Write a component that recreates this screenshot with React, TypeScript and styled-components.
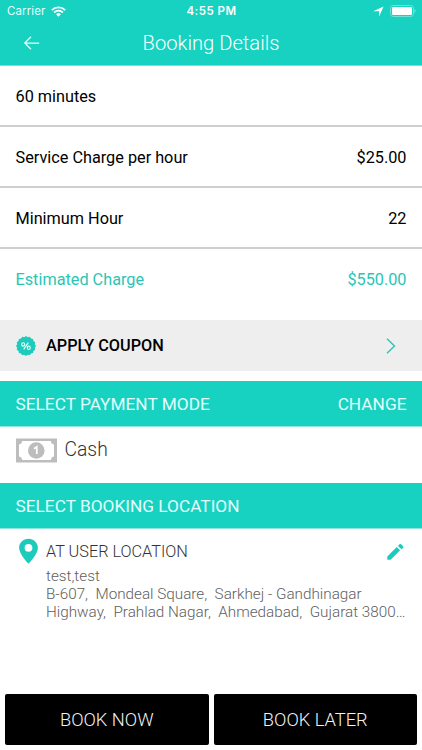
import React from 'react';
import styled, { createGlobalStyle } from 'styled-components';

const teal = '#17d1c1';

const Global = createGlobalStyle`
  * { box-sizing: border-box; }
  body { margin: 0; background: #fff; }
  button { border: 0; padding: 0; background: none; font: inherit; color: inherit; }
  svg { display: block; flex: none; }
`;

const Screen = styled.main`
  width: 422px;
  height: 750px;
  display: flex;
  flex-direction: column;
  overflow: hidden;
  background: #fff;
  color: #000;
  font-family: Roboto, sans-serif;
  font-size: 16.25px;
`;

const Header = styled.header`
  height: 66px;
  flex: none;
  background: ${teal};
  border-bottom: 1px solid #74e3d9;
  color: #fff;
`;

const StatusBar = styled.div`
  height: 22px;
  padding: 0 6px 0 7px;
  display: grid;
  grid-template-columns: 1fr auto 1fr;
  align-items: center;
  font-family: Inter, sans-serif;
  font-size: 11.5px;
`;

const Carrier = styled.div`
  display: flex;
  align-items: center;
  gap: 5px;
  letter-spacing: 0.12px;
  color: #e6fffc;
`;

const Clock = styled.div`
  font-weight: 600;
  letter-spacing: 0.5px;
`;

const StatusIcons = styled.div`
  display: flex;
  justify-content: flex-end;
  align-items: center;
  gap: 6px;
`;

const TitleBar = styled.div`
  height: 41px;
  padding: 0 23px;
  display: grid;
  grid-template-columns: 18px 1fr 18px;
  align-items: center;
`;

const Title = styled.h1`
  margin: 0;
  text-align: center;
  font-size: 20.2px;
  font-weight: 300;
  line-height: 40px;
`;

const ChargeRow = styled.div<{ $accent?: boolean }>`
  height: ${(p) => (p.$accent ? 71 : 61)}px;
  padding: 0 15.5px;
  display: flex;
  flex: none;
  justify-content: space-between;
  line-height: 61px;
  color: ${(p) => (p.$accent ? '#2bc5b6' : '#000')};
  border-bottom: ${(p) => (p.$accent ? '0' : '2px solid #cfcfcf')};
`;

const Coupon = styled.button`
  height: 51px;
  margin-bottom: 10px;
  padding: 0 26px 0 15.5px;
  display: flex;
  flex: none;
  align-items: center;
  background: #eee;
  color: #000;
`;

const CouponLabel = styled.span`
  flex: 1;
  margin-left: 10.5px;
  text-align: left;
  font-weight: 500;
`;

const SectionBar = styled.div`
  height: 46px;
  padding: 0 15.5px;
  display: flex;
  flex: none;
  align-items: center;
  justify-content: space-between;
  background: ${teal};
  border-bottom: 1px solid #8ee8e0;
  color: #e2fffc;
  font-size: 17.27px;
`;

const PaymentMode = styled.div`
  height: 56px;
  padding: 11px 15.5px 0;
  display: flex;
  flex: none;
  align-items: flex-start;
  gap: 8px;
  color: #333;
  font-size: 19.3px;
  font-weight: 300;
  line-height: 24px;
`;

const Location = styled.section`
  flex: 1;
  padding: 9px 16px 0 19px;
  display: grid;
  grid-template-columns: 19px 1fr;
  column-gap: 8px;
  align-content: start;
`;

const LocationHead = styled.div`
  height: 27px;
  display: flex;
  align-items: center;
  justify-content: space-between;
  color: #333;
  font-size: 16.3px;
  font-weight: 300;
`;

const Address = styled.div`
  grid-column: 2;
  margin-top: 2px;
  color: #606060;
  font-size: 15.25px;
  font-weight: 300;
  line-height: 18px;
  white-space: pre;
`;

const Actions = styled.footer`
  flex: none;
  padding: 0 5px 5px;
  display: grid;
  grid-template-columns: 1fr 1fr;
  gap: 5px;
`;

const ActionButton = styled.button`
  height: 51px;
  border-radius: 2px;
  background: #000;
  color: #f2f2f2;
  font-size: 18.25px;
  font-weight: 300;
`;

const WifiIcon = () => (
  <svg width="15" height="11" viewBox="0 0 15 11" fill="none" stroke="#fff" strokeWidth="1.8">
    <path d="M.8 4.1a9.6 9.6 0 0 1 13.4 0M3.1 6.5a6.3 6.3 0 0 1 8.8 0" />
    <path d="M5.1 8.2a3.5 3.5 0 0 1 4.8 0L7.5 10.7z" fill="#fff" stroke="none" />
  </svg>
);

const NavigationIcon = () => (
  <svg width="11" height="11" viewBox="0 0 11 11" fill="#fff">
    <path d="M10.6.4 6.1 10.6V5.2H.2z" />
  </svg>
);

const BatteryIcon = () => (
  <svg width="26" height="12" viewBox="0 0 26 12">
    <rect x=".5" y=".5" width="23" height="11" rx="2.7" fill="none" stroke="#6fe2d8" />
    <rect x="2" y="2" width="20" height="8" rx="1.3" fill="#fff" />
    <path d="M24.6 4v4c1.3-.5 1.3-3.5 0-4" fill="#8be8e0" />
  </svg>
);

const BackIcon = () => (
  <svg width="18" height="16" viewBox="0 0 18 16" fill="none" stroke="#dffffb" strokeWidth="1.25">
    <path d="M8 1.7 1.8 8 8 14.300M2 8h14.2" />
  </svg>
);

const badgeEdge = Array.from({ length: 32 }, (_, i) => {
  const a = (i * Math.PI) / 16;
  const r = i % 2 ? 9 : 10;
  return `${(10 + r * Math.cos(a)).toFixed(2)},${(10 + r * Math.sin(a)).toFixed(2)}`;
}).join(' ');

const CouponIcon = () => (
  <svg width="20" height="20" viewBox="0 0 20 20">
    <polygon points={badgeEdge} fill="#1dcbbc" />
    <g fill="none" stroke="#e8fffc" strokeWidth="1.15">
      <ellipse cx="7.2" cy="8.4" rx="1.5" ry="1.7" />
      <ellipse cx="12.8" cy="11.8" rx="1.5" ry="1.7" />
      <path d="m12.3 6.7-4.6 6.7" />
    </g>
  </svg>
);

const ChevronIcon = () => (
  <svg width="10" height="16" viewBox="0 0 10 16" fill="none" stroke="#2bc5b6" strokeWidth="1.4">
    <path d="m1 .8 7.5 7.200L1 15.200" />
  </svg>
);

const CashIcon = () => (
  <svg width="41" height="25" viewBox="0 0 41 25">
    <path
      fill="#bdbdbd"
      fillRule="evenodd"
      d="M0 .5h41v24H0zM6.2 3C6 5 4.8 6.2 3 6.5v12c1.8.3 3 1.5 3.2 3.5h28.6c.2-2 1.4-3.2 3.2-3.5v-12c-1.8-.3-3-1.5-3.200-3.500z"
    />
    <circle cx="20.3" cy="12.5" r="8.3" fill="#bdbdbd" />
    <path d="m18 10.8 2.800-2V16" fill="none" stroke="#fff" strokeWidth="1.7" />
  </svg>
);

const PinIcon = () => (
  <svg width="19" height="27" viewBox="0 0 19 27">
    <path
      fill="#1dcbbc"
      fillRule="evenodd"
      d="M9.5.7C4.3.7.1 4.700.1 9.800c0 6.700 9.400 16 9.400 16s9.400-9.300 9.400-16C18.900 4.700 14.700.7 9.500.7zm0 5.200a3.900 3.900 0 1 1 0 7.800 3.900 3.900 0 0 1 0-7.800z"
    />
  </svg>
);

const PencilIcon = () => (
  <svg width="20" height="18" viewBox="0 0 20 18" fill="#1dcbbc">
    <path d="M1.3 13.500 10.800 4l3.300 3.300-9.500 9.500H1.300zM11.900 2.900l1.600-1.600q.8-.7 1.600 0l2 2q.7.8 0 1.600L15.500 6.200z" />
  </svg>
);

export default function App() {
  return (
    <Screen>
      <Global />
      <Header>
        <StatusBar>
          <Carrier>Carrier <WifiIcon /></Carrier>
          <Clock>4:55 PM</Clock>
          <StatusIcons><NavigationIcon /><BatteryIcon /></StatusIcons>
        </StatusBar>
        <TitleBar>
          <button aria-label="Back"><BackIcon /></button>
          <Title>Booking Details</Title>
        </TitleBar>
      </Header>
      <ChargeRow><span>60 minutes</span></ChargeRow>
      <ChargeRow><span>Service Charge per hour</span><span>$25.00</span></ChargeRow>
      <ChargeRow><span>Minimum Hour</span><span>22</span></ChargeRow>
      <ChargeRow $accent><span>Estimated Charge</span><span>$550.00</span></ChargeRow>
      <Coupon>
        <CouponIcon />
        <CouponLabel>APPLY COUPON</CouponLabel>
        <ChevronIcon />
      </Coupon>
      <SectionBar><span>SELECT PAYMENT MODE</span><span>CHANGE</span></SectionBar>
      <PaymentMode><CashIcon /><span>Cash</span></PaymentMode>
      <SectionBar><span>SELECT BOOKING LOCATION</span></SectionBar>
      <Location>
        <PinIcon />
        <LocationHead><span>AT USER LOCATION</span><PencilIcon /></LocationHead>
        <Address>{'test,test\nB-607,  Mondeal Square,  Sarkhej - Gandhinagar\nHighway,  Prahlad Nagar,  Ahmedabad,  Gujarat 3800…'}</Address>
      </Location>
      <Actions>
        <ActionButton>BOOK NOW</ActionButton>
        <ActionButton>BOOK LATER</ActionButton>
      </Actions>
    </Screen>
  );
}
